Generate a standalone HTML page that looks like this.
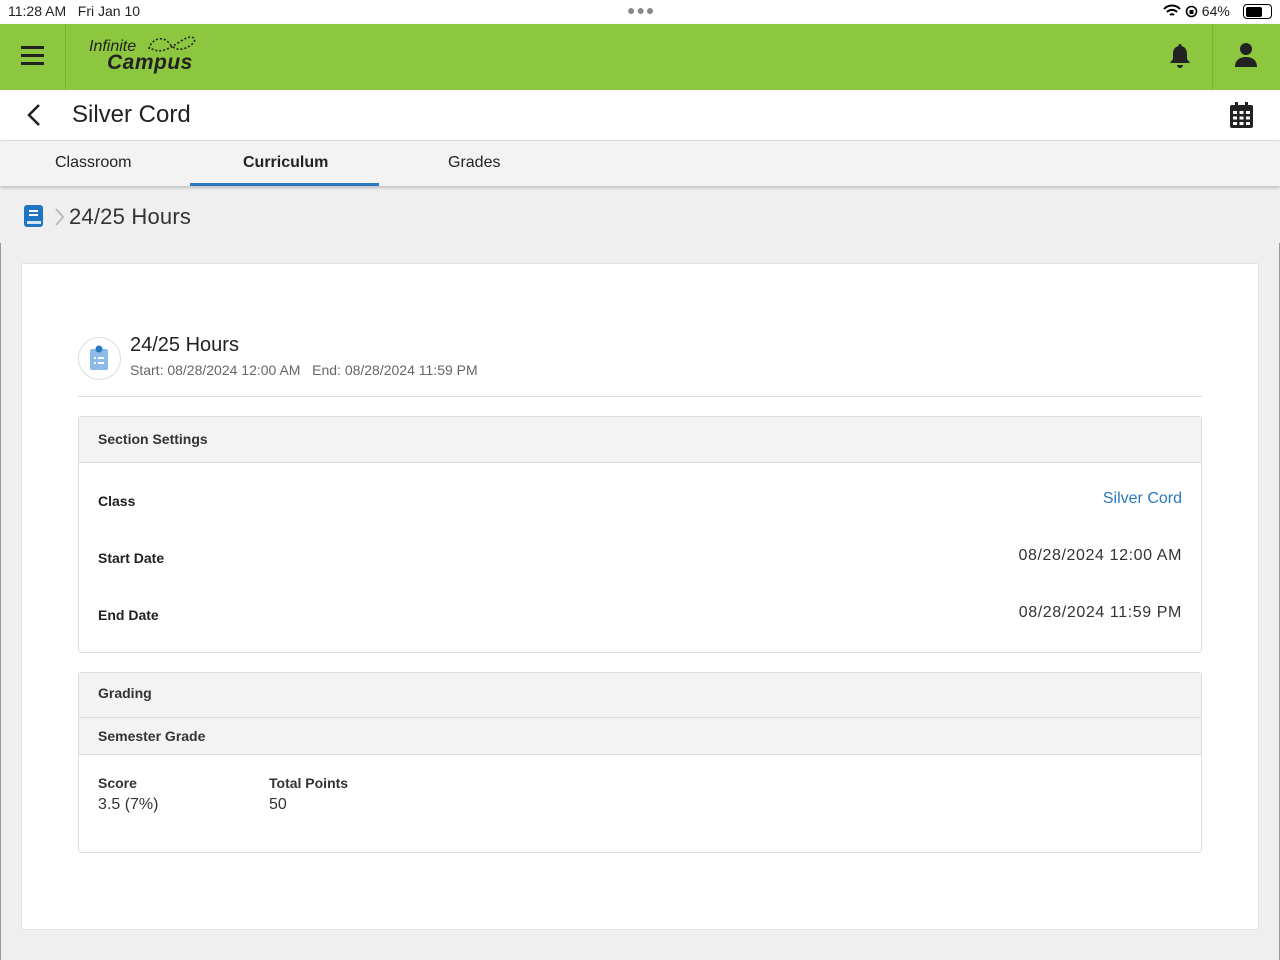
<!DOCTYPE html>
<html><head><style>
*{box-sizing:border-box;margin:0;padding:0}
body{width:1280px;height:960px;overflow:hidden;font-family:"Liberation Sans",Roboto,sans-serif;background:#efefef;color:#222;position:relative}
.abs{position:absolute}
</style></head><body>
<div class="abs" style="left:0;top:0;width:1280px;height:24px;background:#fff;font-size:14px">
 <span class="abs" style="left:8px;top:3px">11:28 AM&nbsp;&nbsp; Fri Jan 10</span>
 <span class="abs" style="left:627px;top:2px;letter-spacing:1px;color:#888;font-size:14px">●●●</span>
 <span class="abs" style="left:1163px;top:3px">
  <svg width="18" height="14" viewBox="0 0 18 14" style="vertical-align:-2px"><path d="M1 5a11 11 0 0 1 16 0M4 8a7 7 0 0 1 10 0M7 11a3 3 0 0 1 4 0" stroke="#000" stroke-width="2" fill="none"/></svg>
  <svg width="13" height="13" viewBox="0 0 13 13" style="vertical-align:-2px"><circle cx="6.5" cy="6.5" r="5" stroke="#000" stroke-width="1.6" fill="none"/><rect x="4.5" y="5" width="4" height="4" fill="#000"/></svg> 64%</span>
 <div class="abs" style="left:1243px;top:4px;width:29px;height:15px;border:1.5px solid #000;border-radius:4px;padding:1.5px"><div style="width:16px;height:100%;background:#000;border-radius:2px"></div></div>
</div>
<div class="abs" style="left:0;top:24px;width:1280px;height:66px;background:#8dc63f;box-shadow:0 2px 4px rgba(0,0,0,.25)">
 <div class="abs" style="left:65px;top:0;width:1px;height:66px;background:#7db334"></div>
 <div class="abs" style="left:1212px;top:0;width:1px;height:66px;background:#7db334"></div>
 <svg class="abs" style="left:21px;top:21px" width="24" height="20"><rect y="1" width="23" height="3" fill="#222"/><rect y="9" width="23" height="3" fill="#222"/><rect y="17" width="23" height="3" fill="#222"/></svg>
 <div class="abs" style="left:89px;top:15px;font-style:italic;font-size:16px;color:#222;line-height:16px">Infinite</div>
 <div class="abs" style="left:107px;top:28px;font-style:italic;font-size:21px;color:#222;line-height:22px;font-weight:bold;letter-spacing:.5px">Campus</div>
 <svg class="abs" style="left:145px;top:9px" width="55" height="25"><path d="M4 16c2-10 14-14 20-6s14 8 22 2 2-12-10-4-22 14-32 6" stroke="#222" stroke-width="1.6" stroke-dasharray="2 2" fill="none"/></svg>
 <svg class="abs" style="left:1168px;top:19px" width="24" height="26" viewBox="0 0 24 26"><path d="M12 1c-1 0-1.5.6-1.5 1.5v.6C6.5 4 5 7 5 11v5l-3 4h20l-3-4v-5c0-4-1.5-7-5.5-7.9v-.6C13.5 1.6 13 1 12 1zM9 22a3 3 0 0 0 6 0z" fill="#222"/></svg>
 <svg class="abs" style="left:1234px;top:18px" width="24" height="26" viewBox="0 0 24 26"><circle cx="12" cy="7" r="6" fill="#222"/><path d="M1 25c0-7 5-10 11-10s11 3 11 10z" fill="#222"/></svg>
</div>
<div class="abs" style="left:0;top:90px;width:1280px;height:51px;background:#fff;border-bottom:1px solid #ddd">
 <svg class="abs" style="left:26px;top:13px" width="16" height="24"><path d="M13 2L3 12l10 10" stroke="#222" stroke-width="2.6" fill="none"/></svg>
 <span class="abs" style="left:72px;top:11px;font-size:24px;color:#222">Silver Cord</span>
 <svg class="abs" style="left:1230px;top:12px" width="23" height="26" viewBox="0 0 23 26"><rect x="5" y="0" width="3" height="5" fill="#222"/><rect x="15" y="0" width="3" height="5" fill="#222"/><rect x="0" y="3" width="23" height="23" rx="2" fill="#222"/><g fill="#fff"><rect x="3" y="9" width="4" height="3"/><rect x="9.5" y="9" width="4" height="3"/><rect x="16" y="9" width="4" height="3"/><rect x="3" y="14.5" width="4" height="3"/><rect x="9.5" y="14.5" width="4" height="3"/><rect x="16" y="14.5" width="4" height="3"/><rect x="3" y="20" width="4" height="3"/><rect x="9.5" y="20" width="4" height="3"/><rect x="16" y="20" width="4" height="3"/></g></svg>
</div>
<div class="abs" style="left:0;top:141px;width:1280px;height:45px;background:#f3f3f3;box-shadow:0 2px 3px rgba(0,0,0,.2);font-size:16px">
 <span class="abs" style="left:55px;top:13px">Classroom</span>
 <span class="abs" style="left:243px;top:13px;font-weight:bold">Curriculum</span>
 <span class="abs" style="left:448px;top:13px">Grades</span>
 <div class="abs" style="left:190px;top:42px;width:189px;height:3px;background:#2a78c2"></div>
</div>
<svg class="abs" style="left:24px;top:205px" width="19" height="22"><rect width="19" height="22" rx="3" fill="#1f75c4"/><rect x="5" y="5" width="9" height="2" fill="#fff"/><rect x="5" y="9" width="9" height="2" fill="#fff"/><rect x="3" y="16" width="14" height="3" fill="#fff" opacity=".8"/></svg>
<svg class="abs" style="left:53px;top:207px" width="12" height="20"><path d="M3 2l7 8-7 8" stroke="#bbb" stroke-width="2" fill="none"/></svg>
<span class="abs" style="left:69px;top:204px;font-size:22px;color:#333;letter-spacing:.2px">24/25 Hours</span>
<div class="abs" style="left:0;top:243px;width:1px;height:717px;background:#999"></div>
<div class="abs" style="left:1279px;top:243px;width:1px;height:717px;background:#999"></div>
<div class="abs" style="left:21px;top:263px;width:1238px;height:667px;background:#fff;border:1px solid #e3e3e3;border-radius:2px"></div>
<div class="abs" style="left:78px;top:337px;width:43px;height:43px;border:1px solid #ddd;border-radius:50%"></div>
<svg class="abs" style="left:90px;top:345px" width="19" height="26"><rect x="0" y="4" width="18" height="21" rx="2" fill="#8cbbe8"/><circle cx="9" cy="4" r="3.5" fill="#2a78c2"/><rect x="4" y="12" width="2" height="2" fill="#fff"/><rect x="8" y="12" width="6" height="2" fill="#fff"/><rect x="4" y="17" width="2" height="2" fill="#fff"/><rect x="8" y="17" width="6" height="2" fill="#fff"/></svg>
<span class="abs" style="left:130px;top:334px;font-size:20px;color:#222">24/25 Hours</span>
<span class="abs" style="left:130px;top:362px;font-size:14px;color:#666">Start: 08/28/2024 12:00 AM&nbsp;&nbsp; End: 08/28/2024 11:59 PM</span>
<div class="abs" style="left:78px;top:396px;width:1124px;height:1px;background:#ddd"></div>
<div class="abs" style="left:78px;top:416px;width:1124px;height:237px;border:1px solid #ddd;border-radius:3px;font-size:14px">
 <div style="height:46px;background:#f3f3f3;border-bottom:1px solid #ddd;padding:14px 19px;font-weight:bold;color:#333">Section Settings</div>
 <span class="abs" style="left:19px;top:76px;font-weight:bold">Class</span>
 <span class="abs" style="right:19px;top:73px;font-size:16px;color:#2a78c2">Silver Cord</span>
 <span class="abs" style="left:19px;top:133px;font-weight:bold">Start Date</span>
 <span class="abs" style="right:19px;top:130px;font-size:16px;color:#333;letter-spacing:.6px">08/28/2024 12:00 AM</span>
 <span class="abs" style="left:19px;top:190px;font-weight:bold">End Date</span>
 <span class="abs" style="right:19px;top:187px;font-size:16px;color:#333;letter-spacing:.6px">08/28/2024 11:59 PM</span>
</div>
<div class="abs" style="left:78px;top:672px;width:1124px;height:181px;border:1px solid #ddd;border-radius:3px;font-size:14px;color:#333">
 <div style="height:45px;background:#f3f3f3;border-bottom:1px solid #ddd;padding:12px 19px;font-weight:bold">Grading</div>
 <div style="height:37px;background:#f3f3f3;border-bottom:1px solid #ddd;padding:10px 19px;font-weight:bold">Semester Grade</div>
 <span class="abs" style="left:19px;top:102px;font-weight:bold">Score</span>
 <span class="abs" style="left:19px;top:123px;font-size:16px">3.5 (7%)</span>
 <span class="abs" style="left:190px;top:102px;font-weight:bold">Total Points</span>
 <span class="abs" style="left:190px;top:123px;font-size:16px">50</span>
</div>
</body></html>
